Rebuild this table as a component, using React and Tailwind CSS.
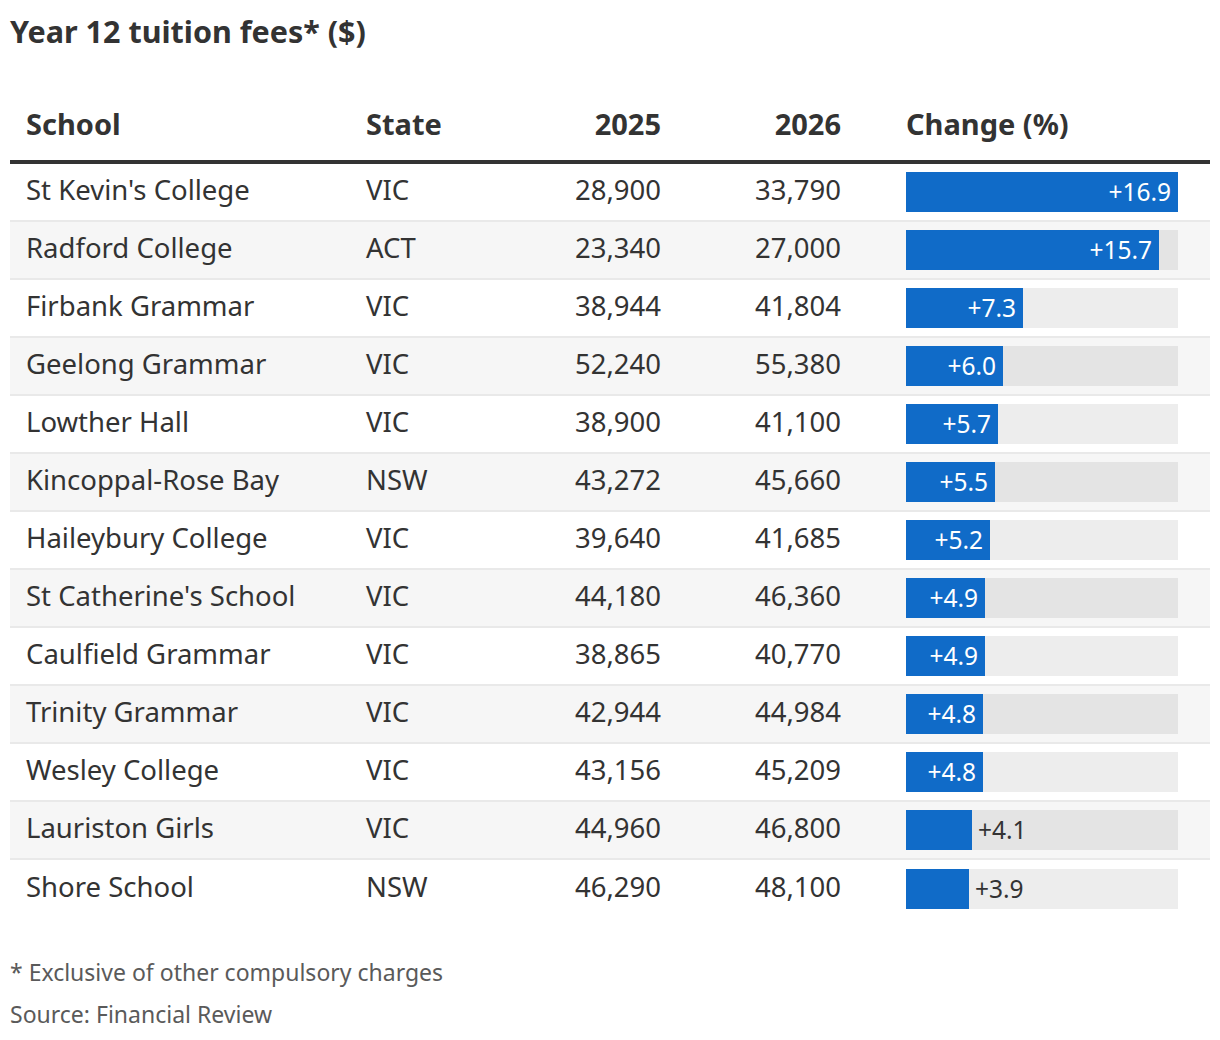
const rows = [
  ["St Kevin's College", "VIC", "28,900", "33,790", 16.9],
  ["Radford College", "ACT", "23,340", "27,000", 15.7],
  ["Firbank Grammar", "VIC", "38,944", "41,804", 7.3],
  ["Geelong Grammar", "VIC", "52,240", "55,380", 6.0],
  ["Lowther Hall", "VIC", "38,900", "41,100", 5.7],
  ["Kincoppal-Rose Bay", "NSW", "43,272", "45,660", 5.5],
  ["Haileybury College", "VIC", "39,640", "41,685", 5.2],
  ["St Catherine's School", "VIC", "44,180", "46,360", 4.9],
  ["Caulfield Grammar", "VIC", "38,865", "40,770", 4.9],
  ["Trinity Grammar", "VIC", "42,944", "44,984", 4.8],
  ["Wesley College", "VIC", "43,156", "45,209", 4.8],
  ["Lauriston Girls", "VIC", "44,960", "46,800", 4.1],
  ["Shore School", "NSW", "46,290", "48,100", 3.9],
];

const MAX = 16.9;
const TRACK = 272;

function Bar({ value }) {
  const w = Math.round((value / MAX) * TRACK);
  const inside = w > 72;
  const label = "+" + value.toFixed(1);
  return (
    <div className="relative h-[40px] w-[272px] bg-black/[0.07]">
      <div
        className="absolute left-0 top-0 h-full bg-[#106bc8] flex items-center justify-end pr-[7px]"
        style={{ width: w }}
      >
        {inside && <span className="text-white text-[24.5px] leading-none">{label}</span>}
      </div>
      {!inside && (
        <span
          className="absolute top-0 h-full flex items-center text-[#333] text-[24.5px] leading-none"
          style={{ left: w + 6 }}
        >
          {label}
        </span>
      )}
    </div>
  );
}

export default function App() {
  return (
    <div className="w-[1220px] h-[1040px] bg-white px-[10px] pt-[11px] text-[#333] font-['Noto_Sans',sans-serif]">
      <h1 className="text-[30.5px] font-bold leading-[40px] text-[#333]">Year 12 tuition fees* ($)</h1>

      <div className="mt-[55px] w-[1200px]">
        <div className="grid grid-cols-[340px_180px_147px_180px_353px] h-[58px] items-start border-b-4 border-[#333] text-[29px] font-bold leading-[36px]">
          <div className="pl-4">School</div>
          <div className="pl-4">State</div>
          <div className="pr-4 text-right">2025</div>
          <div className="pr-4 text-right">2026</div>
          <div className="pl-[49px]">Change (%)</div>
        </div>

        {rows.map(([school, state, a, b, ch], i) => (
          <div
            key={school}
            className={
              "grid grid-cols-[340px_180px_147px_180px_353px] h-[58px] items-center text-[27.5px] leading-none " +
              (i % 2 === 1 ? "bg-[#f6f6f6] " : "bg-white ") +
              (i < rows.length - 1 ? "border-b-2 border-[#e9e9e9]" : "")
            }
          >
            <div className="pl-4 pb-1">{school}</div>
            <div className="pl-4 pb-1">{state}</div>
            <div className="pr-4 pb-1 text-right">{a}</div>
            <div className="pr-4 pb-1 text-right">{b}</div>
            <div className="pl-[49px]">
              <Bar value={ch} />
            </div>
          </div>
        ))}
      </div>

      <div className="mt-[33px] text-[23px] leading-[42px] text-[#5a5a5a]">
        <p>* Exclusive of other compulsory charges</p>
        <p>Source: Financial Review</p>
      </div>
    </div>
  );
}
